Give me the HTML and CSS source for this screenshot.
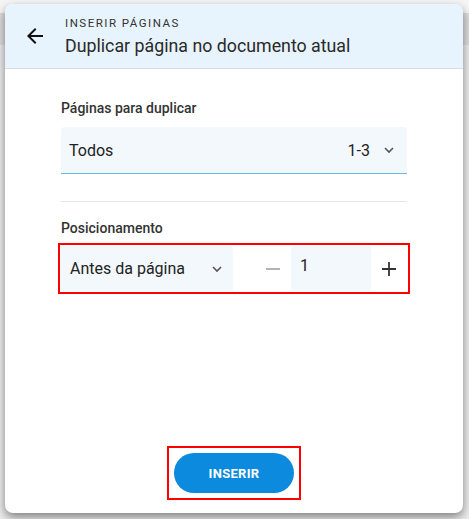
FILE: index.html
```html
<!DOCTYPE html>
<html lang="pt-br">
<head>
    <meta charset="UTF-8">
    <title>Inserir páginas</title>
    <link rel="stylesheet" href="styles.css">
</head>
<body>
    <div class="dialog">
        <header class="dialog-header">
            <button class="btn-voltar" type="button" aria-label="Voltar">
                <svg width="24" height="24" viewBox="0 0 24 24"><path d="M20 11H7.83l5.59-5.59L12 4l-8 8 8 8 1.41-1.41L7.83 13H20v-2z" fill="#111"/></svg>
            </button>
            <div class="titulos">
                <div class="sobretitulo">INSERIR PÁGINAS</div>
                <h1>Duplicar página no documento atual</h1>
            </div>
        </header>

        <div class="conteudo">
            <label class="rotulo">Páginas para duplicar</label>
            <div class="campo campo-paginas">
                <span class="valor">Todos</span>
                <span class="intervalo">1-3</span>
                <svg class="seta" width="14" height="14" viewBox="0 0 14 14"><path d="M3 5l4 4 4-4" fill="none" stroke="#555" stroke-width="1.6"/></svg>
            </div>

            <hr class="divisor">

            <label class="rotulo">Posicionamento</label>
            <div class="linha-posicao destaque">
                <div class="campo campo-posicao">
                    <span class="valor">Antes da página</span>
                    <svg class="seta" width="14" height="14" viewBox="0 0 14 14"><path d="M3 5l4 4 4-4" fill="none" stroke="#555" stroke-width="1.6"/></svg>
                </div>
                <button class="btn-passo menos" type="button" aria-label="Diminuir">
                    <svg width="16" height="16" viewBox="0 0 16 16"><path d="M1 8h14" stroke="#9a9a9a" stroke-width="1.6"/></svg>
                </button>
                <div class="campo-numero">1</div>
                <button class="btn-passo mais" type="button" aria-label="Aumentar">
                    <svg width="16" height="16" viewBox="0 0 16 16"><path d="M1 8h14M8 1v14" stroke="#333" stroke-width="1.8"/></svg>
                </button>
            </div>
        </div>

        <div class="rodape">
            <div class="moldura-botao">
                <button class="btn-inserir" type="button">INSERIR</button>
            </div>
        </div>
    </div>
</body>
</html>
```
FILE: styles.css
```css
body {
    font-family: Roboto, "Noto Sans", Arial, sans-serif;
    margin: 0;
    padding: 0;
    width: 469px;
    height: 519px;
    overflow: hidden;
    background: linear-gradient(to bottom, #f5f5f5 0, #f5f5f5 13px, #dcdcdc 13px, #dcdcdc 45px, #ebebeb 45px);
}

.dialog {
    margin: 4px 0 0 5px;
    width: 458px;
    height: 509px;
    background-color: #fff;
    border-radius: 8px;
    box-shadow: 0 4px 10px rgba(0, 0, 0, 0.45);
    display: flex;
    flex-direction: column;
    overflow: hidden;
}

.dialog-header {
    height: 65px;
    box-sizing: border-box;
    background-color: #e7f3fd;
    border-bottom: 1px solid #d3dfe9;
    display: flex;
    align-items: center;
}

.btn-voltar {
    width: 36px;
    height: 36px;
    margin-left: 12px;
    margin-right: 12px;
    padding: 0;
    border: none;
    background: none;
    display: flex;
    align-items: center;
    justify-content: center;
}

.titulos {
    padding-top: 1px;
}

.sobretitulo {
    font-size: 11.5px;
    letter-spacing: 1.5px;
    color: #333;
    line-height: 14px;
}

.titulos h1 {
    margin: 5px 0 0 0;
    font-size: 17.8px;
    font-weight: 400;
    color: #2a2a2a;
    line-height: 22px;
}

.conteudo {
    padding: 29px 56px 0 56px;
    display: flex;
    flex-direction: column;
}

.rotulo {
    font-size: 14px;
    font-weight: 500;
    color: #333;
    line-height: 20px;
}

.campo {
    background-color: #f3f8fc;
    border-radius: 4px 4px 0 0;
    display: flex;
    align-items: center;
    box-sizing: border-box;
    font-size: 16px;
    color: #222;
}

.campo-paginas {
    margin-top: 9px;
    height: 47px;
    padding: 0 11px 0 8px;
    border-bottom: 1px solid #6fb5e6;
}

.campo-paginas .valor {
    flex: 1;
}

.campo-paginas .intervalo {
    margin-right: 12px;
}

.divisor {
    border: none;
    border-top: 1px solid #e6e6e6;
    margin: 27px 0 16px 0;
    width: 100%;
}

.linha-posicao {
    margin-top: 8px;
    height: 45px;
    display: flex;
    align-items: stretch;
}

.campo-posicao {
    width: 172px;
    padding: 0 9px 0 9px;
    justify-content: space-between;
}

.btn-passo {
    border: none;
    background: none;
    padding: 0;
    display: flex;
    align-items: center;
    justify-content: center;
}

.btn-passo.menos {
    width: 58px;
    padding-left: 22px;
}

.btn-passo.mais {
    width: 36px;
}

.campo-numero {
    width: 80px;
    background-color: #f3f8fc;
    font-size: 16px;
    color: #222;
    padding: 10px 0 0 9px;
    box-sizing: border-box;
}

.destaque {
    outline: 2px solid #f00;
    outline-offset: 1px;
}

.rodape {
    margin-top: auto;
    padding-bottom: 13px;
    display: flex;
    justify-content: center;
}

.moldura-botao {
    padding: 5px;
    border: 2px solid #f00;
    display: flex;
}

.btn-inserir {
    width: 120px;
    height: 40px;
    border: none;
    border-radius: 20px;
    background-color: #0b8ade;
    color: #fff;
    font-family: Roboto, Arial, sans-serif;
    font-size: 13px;
    font-weight: 700;
    letter-spacing: 0.3px;
}
```
